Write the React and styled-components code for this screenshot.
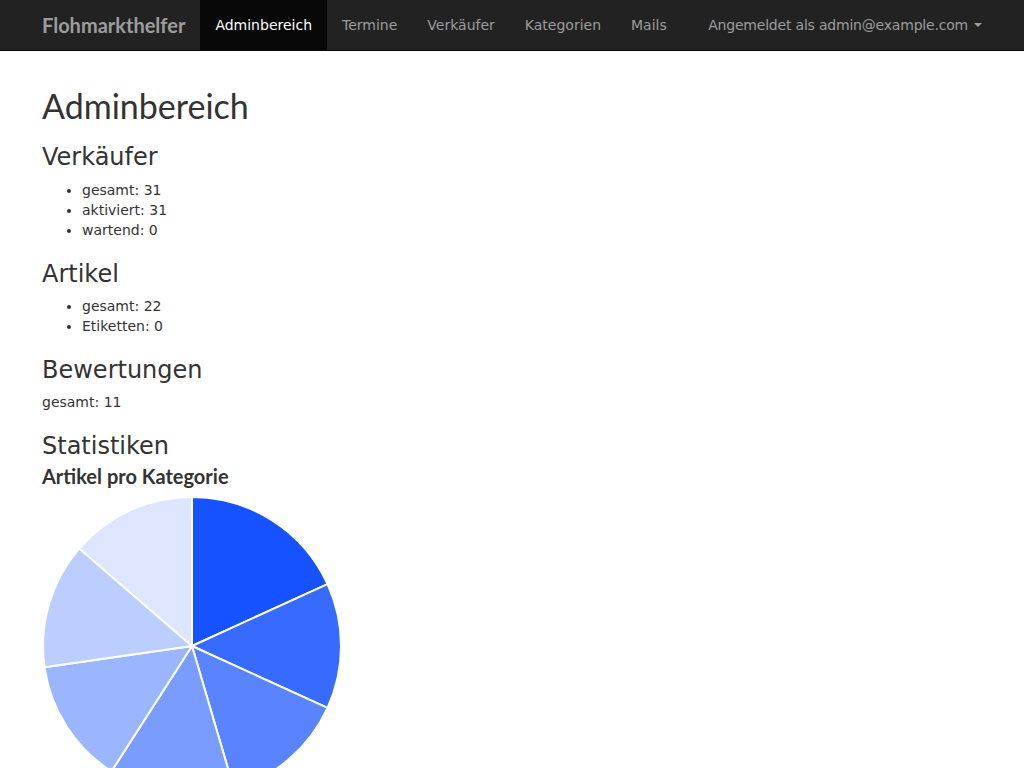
import React from "react";
import styled, { createGlobalStyle } from "styled-components";

const GlobalStyle = createGlobalStyle`
  html, body {
    margin: 0;
    padding: 0;
    background: #fff;
  }
  body {
    font-family: "DejaVu Sans", "Helvetica Neue", Helvetica, Arial, sans-serif;
    font-size: 14px;
    line-height: 1.42857;
    color: #333;
  }
  * {
    box-sizing: border-box;
  }
`;

const Navbar = styled.nav`
  background-color: #222;
  border-bottom: 1px solid #080808;
  height: 51px;
`;

const NavContainer = styled.div`
  width: 970px;
  margin: 0 auto;
  padding: 0 15px;
  display: flex;
  align-items: stretch;
  height: 50px;
`;

const Brand = styled.a`
  display: block;
  margin-left: -15px;
  padding: 15px;
  height: 50px;
  font-family: Lato, "DejaVu Sans", sans-serif;
  font-size: 20px;
  line-height: 20px;
  font-weight: bold;
  color: #9d9d9d;
  text-decoration: none;
  white-space: nowrap;
`;

const NavList = styled.ul`
  display: flex;
  list-style: none;
  margin: 0;
  padding: 0;
  margin-left: ${(p) => (p.$right ? "auto" : "0")};
  margin-right: ${(p) => (p.$right ? "-15px" : "0")};
`;

const NavLink = styled.a`
  display: flex;
  align-items: center;
  padding: 15px;
  height: 50px;
  line-height: 20px;
  white-space: nowrap;
  letter-spacing: ${(p) => (p.$tight ? "-0.2px" : "normal")};
  color: ${(p) => (p.$active ? "#fff" : "#9d9d9d")};
  background-color: ${(p) => (p.$active ? "#080808" : "transparent")};
  text-decoration: none;
`;

const Caret = styled.span`
  display: inline-block;
  width: 0;
  height: 0;
  margin-left: 6px;
  border-top: 4px solid #9d9d9d;
  border-right: 4px solid transparent;
  border-left: 4px solid transparent;
`;

const Container = styled.div`
  width: 970px;
  margin: 0 auto;
  padding: 16px 15px 0;
`;

const H1 = styled.h1`
  font-family: Lato, "DejaVu Sans", sans-serif;
  font-size: 34px;
  font-weight: 400;
  line-height: 1.1;
  margin: 20px 0 10px;
`;

const H3 = styled.h3`
  font-size: 24px;
  font-weight: 500;
  line-height: 1.1;
  margin: 20px 0 10px;
`;

const H4 = styled.h4`
  font-family: Lato, "DejaVu Sans", sans-serif;
  font-size: 20px;
  font-weight: bold;
  line-height: 1.1;
  margin: -5px 0 9px;
`;

const List = styled.ul`
  margin: 0 0 10px;
  padding-left: 40px;
`;

const Text = styled.p`
  margin: 0 0 10px;
`;

const ChartBox = styled.div`
  width: 300px;
  height: 272px;
  overflow: hidden;
`;

const slices = [
  { value: 4, color: "#1652ff" },
  { value: 3, color: "#376bff" },
  { value: 3, color: "#5983ff" },
  { value: 3, color: "#7a9cff" },
  { value: 3, color: "#9bb5ff" },
  { value: 3, color: "#bcceff" },
  { value: 3, color: "#dee6ff" },
];

function PieChart() {
  const cx = 150;
  const cy = 150;
  const r = 149;
  const total = slices.reduce((s, x) => s + x.value, 0);
  let angle = -Math.PI / 2;
  return (
    <svg width="300" height="300" viewBox="0 0 300 300">
      {slices.map((s, i) => {
        const start = angle;
        const end = angle + (s.value / total) * Math.PI * 2;
        angle = end;
        const x1 = cx + r * Math.cos(start);
        const y1 = cy + r * Math.sin(start);
        const x2 = cx + r * Math.cos(end);
        const y2 = cy + r * Math.sin(end);
        const large = end - start > Math.PI ? 1 : 0;
        return (
          <path
            key={i}
            d={`M${cx} ${cy} L${x1} ${y1} A${r} ${r} 0 ${large} 1 ${x2} ${y2} Z`}
            fill={s.color}
            stroke="#fff"
            strokeWidth="2"
            strokeLinejoin="round"
          />
        );
      })}
    </svg>
  );
}

export default function App() {
  return (
    <>
      <GlobalStyle />
      <Navbar>
        <NavContainer>
          <Brand href="#">Flohmarkthelfer</Brand>
          <NavList>
            <li><NavLink href="#" $active>Adminbereich</NavLink></li>
            <li><NavLink href="#">Termine</NavLink></li>
            <li><NavLink href="#">Verkäufer</NavLink></li>
            <li><NavLink href="#">Kategorien</NavLink></li>
            <li><NavLink href="#">Mails</NavLink></li>
          </NavList>
          <NavList $right>
            <li>
              <NavLink href="#" $tight>
                Angemeldet als admin@example.com
                <Caret />
              </NavLink>
            </li>
          </NavList>
        </NavContainer>
      </Navbar>
      <Container>
        <H1>Adminbereich</H1>
        <H3>Verkäufer</H3>
        <List>
          <li>gesamt: 31</li>
          <li>aktiviert: 31</li>
          <li>wartend: 0</li>
        </List>
        <H3>Artikel</H3>
        <List>
          <li>gesamt: 22</li>
          <li>Etiketten: 0</li>
        </List>
        <H3>Bewertungen</H3>
        <Text>gesamt: 11</Text>
        <H3>Statistiken</H3>
        <H4>Artikel pro Kategorie</H4>
        <ChartBox>
          <PieChart />
        </ChartBox>
      </Container>
    </>
  );
}
